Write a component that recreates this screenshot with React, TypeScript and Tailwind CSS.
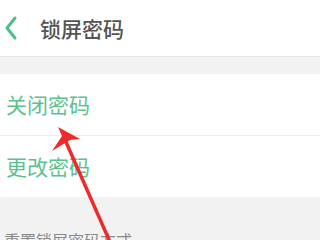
import React from 'react';

const font = { fontFamily: '"Noto Sans CJK SC", "Noto Sans", sans-serif' };

export default function App() {
  return (
    <div className="relative w-[320px] h-[240px] overflow-hidden bg-[#f2f2f2]" style={font}>
      <div className="h-[56px] bg-white flex items-center">
        <svg width="16" height="26" viewBox="0 0 16 26" className="ml-[3px]">
          <path d="M12 3 L4 13 L12 23" fill="none" stroke="#4cbf8a" strokeWidth="3" strokeLinecap="round" strokeLinejoin="round" />
        </svg>
        <span className="ml-[21px] text-[21px] text-[#555555] font-medium leading-none">锁屏密码</span>
      </div>
      <div className="h-[18px] border-t border-[#e6e6e6]" />
      <div className="bg-white">
        <div className="h-[62px] flex items-center pl-[6px] border-b border-[#ececec]">
          <span className="text-[21px] text-[#5cc08f] leading-none">关闭密码</span>
        </div>
        <div className="h-[61px] flex items-center pl-[6px]">
          <span className="text-[21px] text-[#5cc08f] leading-none">更改密码</span>
        </div>
      </div>
      <div className="pt-[35px] pl-[4px] text-[16px] text-[#888888] leading-none whitespace-nowrap">重置锁屏密码方式</div>
      <svg className="absolute left-0 top-0" width="320" height="240" viewBox="0 0 320 240">
        <line x1="110" y1="242" x2="66" y2="142" stroke="#ee2a2a" strokeWidth="3.5" strokeLinecap="round" />
        <polygon points="58,127 80,139 70,140 52,151 62,136" fill="#ee2a2a" />
      </svg>
    </div>
  );
}
